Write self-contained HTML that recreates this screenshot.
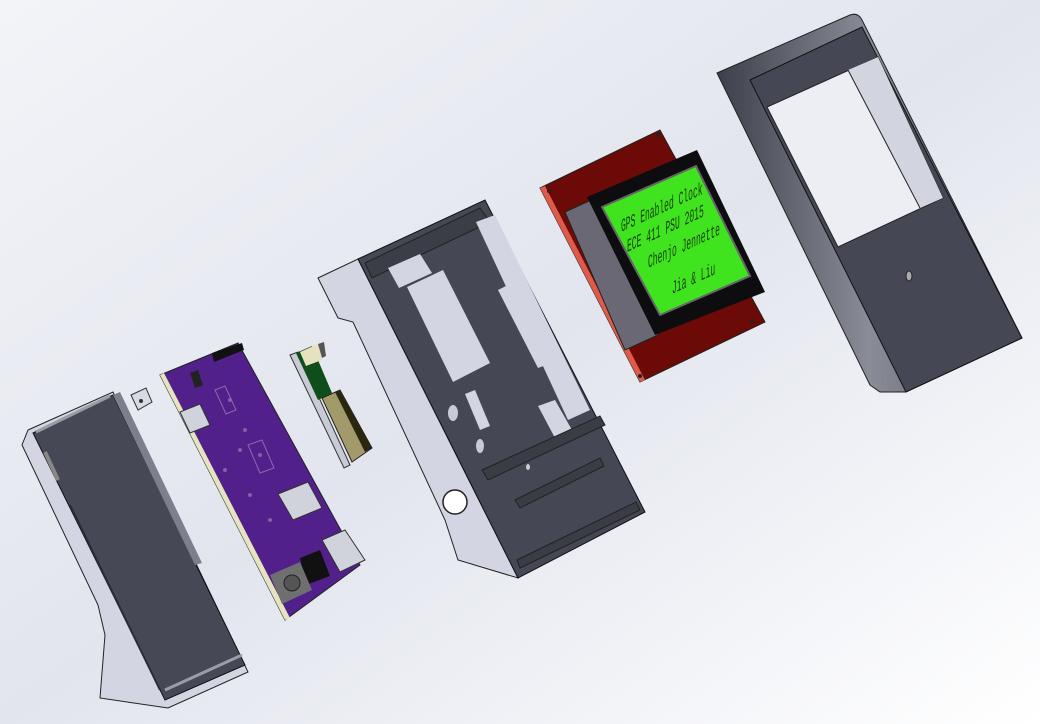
<!DOCTYPE html>
<html><head><meta charset="utf-8"><style>
html,body{margin:0;padding:0}
body{width:1040px;height:724px;overflow:hidden;background:#eef0f4;}
svg{display:block}
</style></head><body>
<svg width="1040" height="724" viewBox="0 0 1040 724" xmlns="http://www.w3.org/2000/svg">
<defs>
<linearGradient id="bg" x1="0" y1="0" x2="1" y2="1">
<stop offset="0" stop-color="#f3f4f8"/><stop offset="0.5" stop-color="#e2e5ee"/><stop offset="1" stop-color="#ffffff"/>
</linearGradient>
<linearGradient id="bev" x1="0" y1="0" x2="1" y2="0">
<stop offset="0" stop-color="#3d3f4a"/><stop offset="0.5" stop-color="#8a8c98"/><stop offset="1" stop-color="#4a4c58"/>
</linearGradient>
</defs>
<rect width="1040" height="724" fill="url(#bg)"/>

<!-- Left stand -->
<path d="M28,430 L113,392 L200,572 L248,672 L168,708 L100,698 L105,635 L98,605 L22,445 Z" fill="#d3d5e2" stroke="#222" stroke-width="1"/>
<polygon points="33,433 113,395 245,665 165,700" fill="#464955" stroke="#111" stroke-width="1"/>
<polygon points="113,395 195,565 202,563 120,392" fill="#7d808c"/>
<line x1="36" y1="432" x2="110" y2="396" stroke="#9a9ca8" stroke-width="3"/>
<line x1="165" y1="690" x2="242" y2="655" stroke="#9a9ca8" stroke-width="3"/>
<line x1="70" y1="505" x2="160" y2="690" stroke="#2a2c33" stroke-width="2"/>
<line x1="45" y1="452" x2="58" y2="480" stroke="#888" stroke-width="4"/>

<!-- small part -->
<polygon points="131,395 146,388 152,402 138,410" fill="#d8dae4" stroke="#333" stroke-width="1"/>
<circle cx="141" cy="401" r="2" fill="#333"/>

<!-- PCB -->
<polygon points="160,375 238,343 360,565 285,620" fill="#52208a" stroke="#222" stroke-width="1"/>
<polygon points="160,375 164,373 290,618 285,620" fill="#e6e4c0"/>
<polygon points="212,353 242,343 244,350 214,362" fill="#111"/>
<polygon points="190,373 198,370 203,385 195,388" fill="#222"/>
<polygon points="180,412 200,404 210,425 190,433" fill="#d0d2dc" stroke="#333"/>
<polygon points="278,494 308,482 322,508 293,520" fill="#d0d2dc" stroke="#333"/>
<polygon points="322,540 345,530 365,560 340,572" fill="#d0d2dc" stroke="#333"/>
<polygon points="300,558 320,550 330,576 306,585" fill="#111"/>
<polygon points="270,575 300,562 312,590 282,604" fill="#6f6f6f"/>
<circle cx="292" cy="583" r="8" fill="#555" stroke="#222"/>
<g fill="#a68ab8" opacity="0.6">
<circle cx="230" cy="400" r="2"/><circle cx="245" cy="430" r="2"/><circle cx="260" cy="455" r="2"/><circle cx="225" cy="470" r="2"/><circle cx="250" cy="495" r="2"/><circle cx="270" cy="520" r="2"/><circle cx="240" cy="450" r="2"/>
</g>
<polygon points="215,390 225,386 236,410 226,414" fill="none" stroke="#8a6ab0"/>
<polygon points="248,445 262,440 274,468 260,473" fill="none" stroke="#8a6ab0"/>

<!-- small board -->
<polygon points="290,355 298,352 350,465 344,468" fill="#c8cad6" stroke="#333" stroke-width="1"/>
<polygon points="296,353 312,346 332,393 318,400" fill="#0f4d1a"/>
<polygon points="300,352 318,344 322,360 306,366" fill="#e6e2c0"/>
<polygon points="318,344 324,342 326,356 322,358" fill="#555"/>
<polygon points="322,398 340,390 372,448 352,462" fill="#a39a6b" stroke="#222"/>
<polygon points="335,392 340,390 372,448 365,452" fill="#2a2610"/>

<!-- Middle case -->
<polygon points="318,278 358,259 518,578 458,560 445,520 353,322 338,318" fill="#d3d5e2" stroke="#222" stroke-width="1"/>
<polygon points="358,259 485,200 645,512 518,578" fill="#454854" stroke="#111" stroke-width="1"/>
<polygon points="365,263 480,208 490,222 372,278" fill="#3b3d47" stroke="#222"/>
<polygon points="476,222 495,215 590,410 568,420" fill="#d3d5e2"/>
<polygon points="388,268 420,254 432,273 399,288" fill="#d3d5e2"/>
<polygon points="407,287 443,270 490,363 453,382" fill="#d3d5e2"/>
<polygon points="498,290 506,286 546,365 538,368" fill="#d3d5e2"/>
<polygon points="465,394 475,390 490,426 480,430" fill="#d3d5e2"/>
<polygon points="538,406 555,400 572,430 555,438" fill="#d3d5e2"/>
<polygon points="482,470 600,416 605,425 488,480" fill="#3a3c46" stroke="#222"/>
<polygon points="515,500 600,458 604,466 520,508" fill="#3a3c46" stroke="#222"/>
<polygon points="517,560 636,502 640,510 520,568" fill="#3a3c46" stroke="#222"/>
<ellipse cx="453" cy="413" rx="5" ry="8" fill="#c8cad4"/>
<ellipse cx="480" cy="446" rx="4" ry="7" fill="#c8cad4"/>
<ellipse cx="528" cy="467" rx="2" ry="3" fill="#c8cad4"/>
<circle cx="455" cy="502" r="12" fill="#fff" stroke="#222" stroke-width="1.5"/>

<!-- LCD module -->
<polygon points="540,188 660,130 765,322 640,382" fill="#6b0a07" stroke="#222" stroke-width="1"/>
<polygon points="540,188 545,186 645,380 640,382" fill="#e05a4a"/>
<polygon points="565,212 600,196 658,335 625,350" fill="#6a6874" stroke="#222"/>
<polygon points="587,197 697,150 765,292 655,335" fill="#0d0d10"/>
<polygon points="602,207 696,166 750,276 660,315" fill="#3fe41f" stroke="#666" stroke-width="2"/>
<g font-family="Liberation Mono, monospace" font-size="8" fill="#1a3a10">
<text transform="translate(621,232) skewY(-25) scale(1,2.3)">GPS Enabled Clock</text>
<text transform="translate(627,252) skewY(-25) scale(1,2.3)">ECE 411   PSU 2015</text>
<text transform="translate(648,268) skewY(-25) scale(1,2.3)">Chenjo  Jennette</text>
<text transform="translate(672,294) skewY(-25) scale(1,2.3)">Jia &amp; Liu</text>
</g>
<circle cx="549" cy="191" r="2" fill="#222"/><circle cx="658" cy="135" r="2" fill="#222"/><circle cx="752" cy="321" r="2" fill="#222"/><circle cx="640" cy="376" r="2" fill="#222"/>

<!-- Right bezel -->
<path d="M717,73 L850,15 Q858,12 862,20 L1022,338 L906,392 L880,392 L870,385 Z" fill="url(#bev)" stroke="#222" stroke-width="1"/>
<polygon points="750,80 862,27 1022,338 906,392" fill="#454854" stroke="#111" stroke-width="1"/>
<polygon points="767,107 878,57 943,198 838,247" fill="#eceef3" stroke="#222" stroke-width="1"/>
<polygon points="848,70 878,57 943,198 920,208" fill="#d2d4e0"/>
<line x1="848" y1="70" x2="920" y2="208" stroke="#222"/>
<ellipse cx="909" cy="276" rx="3" ry="5" fill="#aaa" stroke="#222"/>
</svg>
</body></html>
